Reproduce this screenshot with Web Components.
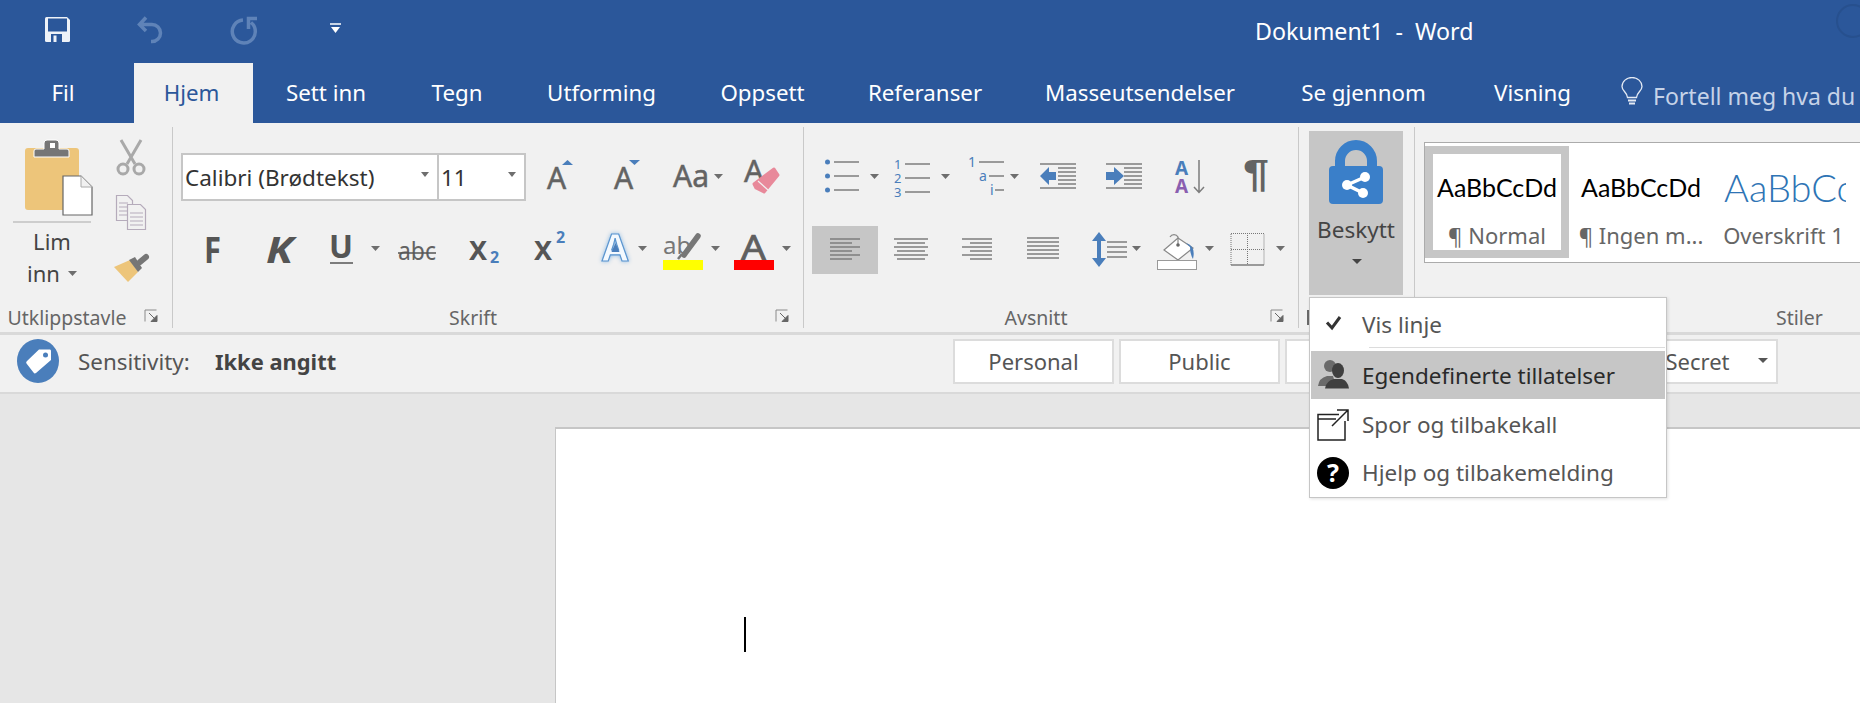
<!DOCTYPE html>
<html lang="nb">
<head>
<meta charset="utf-8">
<title>Dokument1 - Word</title>
<style>
html, body { margin: 0; height: 100%; overflow: hidden; background: #e6e6e6; }
body { font-family: "Noto Sans", "Open Sans", sans-serif; color: #444; }
</style>
</head>
<body>
<word-app></word-app>
<script>
const BLUE = '#4a7ebb';
const GREY = '#636363';

const tri = (x, y, w = 9, c = '#6e6e6e') => `<path d="M${x} ${y}h${w}l${-w / 2} 5z" fill="${c}"/>`;
const l = (x1, x2, y, c = '#7c7c7c') => `<path d="M${x1} ${y}H${x2}" stroke="${c}" stroke-width="1.5" fill="none"/>`;
const t = (x, y, s, size, fill = GREY, extra = '') =>
	`<text x="${x}" y="${y}" font-size="${size}" fill="${fill}" ${extra}>${s}</text>`;

// every icon is drawn in page coordinates: [x, width, height, svg]
const ICONS = {
	paste: [0, 108, 175, `
		<rect x="25" y="148" width="54" height="62" rx="3" fill="#edc57a"/>
		<path d="M34 157v-6q0-2 2-2h8v-6q0-3 3-3h9q3 0 3 3v6h8q2 0 2 2v6z" fill="#767676" stroke="#fff" stroke-width="1"/>
		<rect x="50" y="143" width="5" height="5" fill="#fff"/>
		<path d="M63 176H81L92 187V215H63Z" fill="#fff" stroke="#666" stroke-width="1.2"/>
		<path d="M81 176V187H92" fill="#f1f1f1" stroke="#aaa"/>
		${l(13, 91, 222, '#c0c0c0')}
		${t(52, 250, 'Lim', 22, '#444', 'text-anchor="middle"')}
		${t(27, 282, 'inn', 22, '#444')}
		${tri(68, 271)}`],
	cut: [108, 64, 50, `
		<g fill="none" stroke="#a9a9a9" stroke-width="3">
			<circle cx="123" cy="169" r="5"/><circle cx="139" cy="169" r="5"/>
			<path d="M127 164L141 140M135 164L121 140"/>
		</g>`],
	copy: [108, 64, 50, `
		<g fill="#f1f1f1" stroke="#b5abbb" stroke-width="1.2">
			<path d="M116.500 195.500h11l5 5v20h-16z"/>
			<path d="M127.500 204.500h13l5 5v20h-18z"/>
		</g>
		<path d="M119 203h9M119 207h8M119 211h8M119 215h8M130 213h13M130 217h13M130 221h13M130 225h13" stroke="#b5abbb"/>`],
	painter: [108, 64, 40, `
		<path d="M114 267L130 260L138 272L128 282Z" fill="#edc57a"/>
		<path d="M129 260L135 257L142 268L138 272Z" fill="#767676"/>
		<path d="M140 262L146 257" stroke="#767676" stroke-width="6" stroke-linecap="round"/>`],
	grow: [526, 69, 48, `${t(547, 189, 'A', 30, GREY, `stroke="${GREY}" stroke-width=".5"`)}<path d="M562 165l5.500-5l5.500 5z" fill="${BLUE}"/>`],
	shrink: [595, 65, 48, `${t(614, 189, 'A', 30, GREY, `stroke="${GREY}" stroke-width=".5"`)}<path d="M629 160l5.500 5l5.500-5z" fill="${BLUE}"/>`],
	aa: [660, 75, 48, `${t(673, 187, 'Aa', 30, GREY, `stroke="${GREY}" stroke-width=".5"`)}${tri(714, 174)}`],
	clear: [735, 65, 48, `${t(744, 182, 'A', 31, GREY, `stroke="${GREY}" stroke-width=".5"`)}
		<path d="M774 169L778 175L764 192L756 188L754 184Z" fill="#e8899a" stroke="#e8899a" stroke-width="3" stroke-linejoin="round"/>
		<path d="M758 181L768 190" stroke="#f1f1f1" stroke-width="1.2"/>`],
	bold: [181, 64, 48, t(204, 263, 'F', 35, '#555', 'font-weight="700" textLength="17" lengthAdjust="spacingAndGlyphs"')],
	italic: [245, 65, 48, t(266, 263, 'K', 35, '#555', 'font-weight="700" font-style="italic" textLength="27" lengthAdjust="spacingAndGlyphs"')],
	under: [310, 75, 48, `${t(329, 258, 'U', 32, '#555', 'font-weight="700" textLength="24" lengthAdjust="spacingAndGlyphs"')}
		${l(330, 353, 263, '#555')}${tri(371, 246)}`],
	strike: [385, 65, 48, `${t(398, 260, 'abc', 25, GREY, 'textLength="38" lengthAdjust="spacingAndGlyphs"')}${l(398, 436, 253, '#555')}`],
	sub: [450, 70, 48, `${t(469, 260, 'X', 27, '#555', 'font-weight="700"')}${t(490, 263, '2', 16, BLUE, 'font-weight="700"')}`],
	sup: [520, 70, 48, `${t(534, 260, 'X', 27, '#555', 'font-weight="700"')}${t(556, 243, '2', 16, BLUE, 'font-weight="700"')}`],
	effects: [590, 65, 48, `
		<g style="filter:drop-shadow(0 0 2px #8fbbe4)">${t(602, 261, 'A', 38, '#f4f9fe', `font-weight="700" stroke="#5b95cf" stroke-width="1.2"`)}</g>
		<path d="M615.500 243l4 9h-8z" fill="${BLUE}"/>${tri(638, 246)}`],
	high: [655, 75, 48, `${t(663, 254, 'ab', 24, '#777')}
		<path d="M698 236L684 255" stroke="#777" stroke-width="5.500" stroke-linecap="round"/>
		<path d="M682 254L678 259" stroke="#777" stroke-width="2.500"/>
		<rect x="663" y="260" width="40" height="10" fill="#ff0"/>${tri(711, 246)}`],
	color: [730, 73, 48, `${t(741, 260, 'A', 35, '#5f5f5f', 'stroke="#5f5f5f" stroke-width=".7" textLength="25" lengthAdjust="spacingAndGlyphs"')}
		<rect x="734" y="260" width="40" height="10" fill="#f00"/>${tri(782, 246)}`],
	bullets: [812, 73, 48, `
		<g fill="${BLUE}"><circle cx="827.500" cy="162" r="2.500"/><circle cx="827.500" cy="176" r="2.500"/><circle cx="827.500" cy="190" r="2.500"/></g>
		${l(834, 859, 162)}${l(834, 859, 176)}${l(834, 859, 190)}${tri(870, 174)}`],
	numbers: [885, 73, 48, `
		${t(894, 169, '1', 13, BLUE)}${t(894, 183, '2', 13, BLUE)}${t(894, 197, '3', 13, BLUE)}
		${l(905, 930, 164)}${l(905, 930, 178)}${l(905, 930, 192)}${tri(941, 174)}`],
	multi: [958, 72, 48, `
		${t(968, 167, '1', 14, BLUE)}${t(979, 181, 'a', 14, BLUE)}${t(990, 195, 'i', 14, BLUE)}
		${l(979, 1004, 162)}${l(989, 1004, 176)}${l(995, 1004, 190)}${tri(1010, 174)}`],
	outdent: [1030, 60, 48, `
		${l(1040, 1076, 164)}${l(1040, 1076, 188)}
		${[168, 172, 176, 180, 184].map(y => l(1058, 1076, y)).join('')}
		<path d="M1040 176L1049 167V172H1056V180H1049V185Z" fill="${BLUE}"/>`],
	indent: [1090, 70, 48, `
		${l(1106, 1142, 164)}${l(1106, 1142, 188)}
		${[168, 172, 176, 180, 184].map(y => l(1124, 1142, y)).join('')}
		<path d="M1106 172H1114V167L1124 176L1114 185V180H1106Z" fill="${BLUE}"/>`],
	sort: [1160, 70, 48, `
		${t(1175, 175, 'A', 19, BLUE, 'font-weight="700"')}${t(1175, 193, 'A', 19, '#8a5fb0', 'font-weight="700"')}
		<path d="M1199 160V192M1194 187L1199 192.500L1204 187" stroke="#7c7c7c" stroke-width="1.5" fill="none"/>`],
	pilcrow: [1230, 60, 48, t(1243, 187, '¶', 38, '#636363', 'font-weight="700" font-family="Liberation Sans" textLength="26" lengthAdjust="spacingAndGlyphs"')],
	left: [812, 66, 48, `<rect x="812" y="226" width="66" height="48" fill="#c6c6c6"/>
		${[239, 243, 247, 251, 255, 259].map((y, i) => l(830, i % 2 ? 852 : 860, y)).join('')}`],
	center: [878, 67, 48, [239, 243, 247, 251, 255, 259].map((y, i) => i % 2 ? l(897, 925, y) : l(894, 928, y)).join('')],
	right: [945, 65, 48, [239, 243, 247, 251, 255, 259].map((y, i) => l(i % 2 ? 970 : 962, 992, y)).join('')],
	justify: [1010, 70, 48, [238, 242, 246, 250, 254, 258].map(y => l(1027, 1059, y)).join('')],
	spacing: [1080, 70, 48, `
		<path d="M1099 238V261" stroke="${BLUE}" stroke-width="4"/>
		<path d="M1092 241L1099 232L1106 241ZM1092 258L1099 267L1106 258Z" fill="${BLUE}"/>
		${[242, 247, 252, 257].map(y => l(1107, 1127, y)).join('')}${tri(1132, 246)}`],
	shading: [1150, 72, 48, `
		<path d="M1178 238L1193 248L1178 260L1164 250Z" fill="#fff" stroke="#888" stroke-width="1.2"/>
		<path d="M1178 246V237a4.500 4.500 0 0 0-8 0" fill="none" stroke="#888" stroke-width="1.2"/>
		<circle cx="1178" cy="245" r="1.800" fill="#666"/>
		<path d="M1186 243Q1196 246 1193 259Q1190 254 1190 247Z" fill="${BLUE}"/>
		<rect x="1157.500" y="260.500" width="39" height="9" fill="#fff" stroke="#999"/>${tri(1205, 246)}`],
	borders: [1222, 68, 48, `
		<path d="M1231 233.500H1264V265M1231 265V233.500M1231 249.500H1264M1247.500 233V265" fill="none" stroke="#777" stroke-dasharray="1 1"/>
		${l(1231, 1264, 265)}${tri(1276, 246)}`]
};

class BaseElement extends HTMLElement {
	constructor() {
		super();
		this._root = this.attachShadow({ mode: 'open' });
		this._root.innerHTML = this.template();
	}
}

class RibbonBtn extends BaseElement {
	template() {
		const [x, w, h, svg] = ICONS[this.getAttribute('icon')];
		const y = this.getAttribute('y') || 0;
		return `<style>:host { display: block; flex: none; width: ${w}px; height: ${h}px; } svg { display: block; overflow: visible; }</style>
		<svg width="${w}" height="${h}" viewBox="${x} ${y} ${w} ${h}">${svg}</svg>`;
	}
}
customElements.define('ribbon-btn', RibbonBtn);

class RibbonRow extends BaseElement {
	template() {
		return `<style>:host { display: flex; height: 48px; }</style><slot></slot>`;
	}
}
customElements.define('ribbon-row', RibbonRow);

class WordCombo extends BaseElement {
	template() {
		return `<style>
		:host { display: flex; align-items: center; justify-content: space-between; box-sizing: border-box; flex: none;
			height: 48px; background: #fff; border: 2px solid #c6c6c6; padding: 0 4px 0 2px; font-size: 22.500px; color: #333; white-space: nowrap; }
		i { flex: none; width: 0; height: 0; border: 4.500px solid transparent; border-top: 5px solid #6e6e6e; border-bottom: 0; margin: 0 4px 5px 0; }
		</style><span><slot></slot></span><i></i>`;
	}
}
customElements.define('word-combo', WordCombo);

class RibbonGroup extends BaseElement {
	template() {
		const launcher = this.hasAttribute('launcher');
		return `<style>
		:host { display: flex; flex-direction: column; flex: none; box-sizing: border-box; height: 201px; margin-top: 4px; border-right: 1px solid #c9c9c9; }
		.body { height: 173px; }
		.foot { display: flex; align-items: center; height: 28px; padding-top: 6px; box-sizing: border-box; font-size: 19.500px; color: #666; white-space: nowrap; }
		.label { flex: 1; text-align: center; }
		.launch { flex: none; width: 38px; }
		svg { display: block; margin-top: -2px; margin-left: 10px; }
		</style>
		<div class="body"><slot></slot></div>
		<div class="foot"><div class="label"><slot name="label"></slot></div>
		${launcher ? `<div class="launch"><svg width="15" height="14" viewBox="0 0 15 14" fill="none">
			<path d="M12.500 1H1V12.500" stroke="#8a8a8a"/><path d="M5 4L11 10M13 6.500V12.500H7Z" stroke="#666" fill="#666"/></svg></div>` : ''}</div>`;
	}
}
customElements.define('ribbon-group', RibbonGroup);

class StyleCard extends BaseElement {
	template() {
		return `<style>
		:host { display: block; flex: none; box-sizing: border-box; width: 144px; height: 112px; border: 8px solid transparent; overflow: hidden; }
		:host([selected]) { border-color: #c6c6c6; background: #fff; background-clip: padding-box; }
		.sample { display: flex; align-items: center; justify-content: center; height: 66px; white-space: nowrap; overflow: hidden;
			font-family: Lato, "Noto Sans", sans-serif; font-size: 25px; color: #000; }
		.name { height: 30px; line-height: 30px; text-align: center; font-size: 22px; color: #666; white-space: nowrap; }
		:host([heading]) .sample { justify-content: flex-start; padding-left: 3px; font-size: 38px; font-weight: 300; color: #2e74b5; }
		</style><div class="sample"><slot name="sample"></slot></div><div class="name"><slot></slot></div>`;
	}
}
customElements.define('style-card', StyleCard);

class WordTab extends BaseElement {
	template() {
		return `<style>
		:host { display: flex; align-items: center; justify-content: center; flex: none; height: 60px; color: #fff; font-size: 22.300px; padding-bottom: 2px; box-sizing: border-box; white-space: nowrap; }
		:host([active]) { background: #f1f1f1; color: #2b579a; }
		</style><slot></slot>`;
	}
}
customElements.define('word-tab', WordTab);

class WordTitlebar extends BaseElement {
	template() {
		return `<style>
		:host { display: flex; position: relative; height: 63px; background: #2b579a; overflow: hidden; }
		svg { display: block; flex: none; }
		.title { flex: none; margin: 15px 0 0 785px; color: #fff; font-size: 23.200px; white-space: pre; }
		.ring { position: absolute; right: 0; top: 0; }
		</style>
		<svg width="470" height="63" viewBox="0 0 470 63">
			<path d="M45 18.500q0-1.500 1.500-1.500H67l3 3V40.500q0 1.500-1.500 1.500H46.500q-1.500 0-1.500-1.500Z" fill="#eef2f8"/>
			<rect x="48" y="18.500" width="19" height="13" fill="#2b579a"/>
			<rect x="51" y="34" width="11" height="8" fill="#2b579a"/>
			<rect x="53.500" y="35.500" width="3" height="6.500" fill="#eef2f8"/>
			<path d="M146 17.500L139.500 24.500L146 31M140 24.500H152a8.500 8.500 0 0 1 0 17h-1" fill="none" stroke="#5f83b8" stroke-width="3.500"/>
			<path d="M243 20A11.500 11.500 0 1 0 251 22.500M257 18.500H248.500V29" fill="none" stroke="#5f83b8" stroke-width="3.500"/>
			<path d="M330 24H341" stroke="#fff" stroke-width="1.500"/><path d="M331 27H340L335.500 33Z" fill="#fff"/>
		</svg>
		<div class="title">Dokument1  -  Word</div>
		<svg class="ring" width="30" height="45" viewBox="0 0 30 45"><circle cx="23" cy="21" r="16" fill="none" stroke="#27508e" stroke-width="2"/></svg>`;
	}
}
customElements.define('word-titlebar', WordTitlebar);

class WordTabs extends BaseElement {
	template() {
		return `<style>
		:host { display: flex; align-items: stretch; height: 60px; background: #2b579a; overflow: hidden; }
		.tell { display: flex; align-items: center; flex: none; margin-left: 16px; color: #c6d3e8; font-size: 23px; white-space: nowrap; padding-top: 6px; }
		svg { flex: none; margin: -10px 10px 0 0; }
		</style><slot></slot>
		<div class="tell"><svg width="22" height="28" viewBox="0 0 22 28" fill="none" stroke="#e4eaf4" stroke-width="1.300">
			<path d="M6.500 20.500C6 15 1 14 1 9.500a10 9 0 0 1 20 0C21 14 16 15 15.500 20.500Z"/><path d="M7 23.500H15M8 26.500H14" stroke-width="1.800"/></svg>
			<slot name="tell"></slot></div>`;
	}
}
customElements.define('word-tabs', WordTabs);

class WordRibbon extends BaseElement {
	template() {
		return `<style>
		:host { display: flex; height: 212px; box-sizing: border-box; background: #f1f1f1; border-bottom: 3px solid #d9d9d9; overflow: hidden; }
		</style><slot></slot>`;
	}
}
customElements.define('word-ribbon', WordRibbon);

class ProtectBtn extends BaseElement {
	template() {
		return `<style>
		:host { display: block; box-sizing: border-box; width: 94px; height: 164px; margin: 4px 0 0 10px; background: #c6c6c6; }
		svg { display: block; }
		</style>
		<svg width="94" height="164" viewBox="1309 131 94 164">
			<path d="M1340 170V161a16 16 0 0 1 32 0V170" fill="none" stroke="#3a7fc9" stroke-width="10"/>
			<rect x="1329" y="166" width="54" height="38" rx="4" fill="#3a7fc9"/>
			<path d="M1365 177L1347 185L1363 193" fill="none" stroke="#fff" stroke-width="3.500"/>
			<g fill="#fff"><circle cx="1365" cy="177" r="5"/><circle cx="1347" cy="185" r="5"/><circle cx="1363" cy="193" r="5"/></g>
			<text x="1356" y="238" font-size="22.500" fill="#444" text-anchor="middle">Beskytt</text>
			<path d="M1352 259h10l-5 5z" fill="#444"/>
		</svg>`;
	}
}
customElements.define('protect-btn', ProtectBtn);

class SensButton extends BaseElement {
	template() {
		return `<style>
		:host { display: flex; align-items: center; justify-content: center; position: relative; flex: none; box-sizing: border-box; width: 161px; height: 45px;
			background: #fff; border: 2px solid #dcdcdc; font-size: 22px; color: #555; }
		i { position: absolute; right: 8px; top: 17px; width: 0; height: 0; border: 5px solid transparent; border-top: 5px solid #555; border-bottom: 0; }
		</style><slot></slot>${this.hasAttribute('drop') ? '<i></i>' : ''}`;
	}
}
customElements.define('sens-button', SensButton);

class SensitivityBar extends BaseElement {
	template() {
		return `<style>
		:host { display: flex; align-items: center; box-sizing: border-box; height: 59px; padding: 0 82px 5px 17px; background: #f1f1f1; border-bottom: 2px solid #d9d9d9; }
		svg { flex: none; margin-right: 19px; }
		.lab { flex: none; font-size: 22.400px; color: #555; width: 137px; white-space: nowrap; }
		.val { flex: none; font-size: 21.900px; font-weight: 700; color: #444; white-space: nowrap; }
		.btns { display: flex; gap: 5px; margin-left: auto; }
		</style>
		<svg width="42" height="44" viewBox="17 341 42 44">
			<ellipse cx="38" cy="363" rx="21" ry="22" fill="#4a7ebb"/>
			<path d="M39 351.500L50 351.500Q51 351.500 51 353V362L36 375Q34.500 376 33.500 374.500L26.500 365.500Q25.500 364 27 363Z" fill="#fff"/>
			<circle cx="45.500" cy="357" r="2.500" fill="#4a7ebb"/>
		</svg>
		<div class="lab">Sensitivity:</div><div class="val">Ikke angitt</div>
		<div class="btns"><slot></slot></div>`;
	}
}
customElements.define('sensitivity-bar', SensitivityBar);

class DocArea extends BaseElement {
	template() {
		return `<style>
		:host { display: block; height: 309px; padding-top: 33px; box-sizing: border-box; background: #e6e6e6; }
		.page { box-sizing: border-box; height: 276px; margin-left: 555px; padding: 188px 0 0 188px; background: #fff; border-top: 2px solid #c6c6c6; border-left: 1px solid #c6c6c6; }
		.caret { width: 2px; height: 35px; background: #000; }
		</style><div class="page"><div class="caret"></div></div>`;
	}
}
customElements.define('doc-area', DocArea);

class MenuItem extends BaseElement {
	template() {
		return `<style>
		:host { display: flex; align-items: center; height: 48px; font-size: 22.500px; color: #555; white-space: nowrap; }
		:host([active]) { background: #c6c6c6; color: #2a2a2a; }
		:host([first]) { height: 44px; }
		:host(:not([active]):not([first])) .tx { margin-top: -2px; }
		.ic { flex: none; width: 51px; display: flex; justify-content: flex-start; }
		</style><div class="ic"><slot name="icon"></slot></div><div class="tx"><slot></slot></div>`;
	}
}
customElements.define('menu-item', MenuItem);

class WordMenu extends BaseElement {
	template() {
		return `<style>
		:host { display: block; position: absolute; left: 1309px; top: 297px; box-sizing: border-box; width: 358px; height: 201px; padding: 4px 1px 0;
			background: #fff; border: 1px solid #c6c6c6; box-shadow: 1px 1px 3px rgba(0,0,0,.12); }
		.sep { height: 1px; margin: 1px 0 3px 58px; background: #dcdcdc; }
		.gap { height: 2px; }
		</style>
		<slot name="top"></slot><div class="sep"></div><slot name="active"></slot><div class="gap"></div><slot></slot>`;
	}
}
customElements.define('word-menu', WordMenu);

class WordApp extends BaseElement {
	template() {
		return `<style>
		:host { display: block; position: relative; width: 1860px; height: 703px; overflow: hidden; }
		</style>
		<word-titlebar></word-titlebar>
		<word-tabs>
			<word-tab style="width:134px;padding-right:8px">Fil</word-tab>
			<word-tab active style="width:119px;padding-right:4px">Hjem</word-tab>
			<word-tab style="width:146px">Sett inn</word-tab>
			<word-tab style="width:116px">Tegn</word-tab>
			<word-tab style="width:173px">Utforming</word-tab>
			<word-tab style="width:149px">Oppsett</word-tab>
			<word-tab style="width:176px">Referanser</word-tab>
			<word-tab style="width:254px">Masseutsendelser</word-tab>
			<word-tab style="width:193px">Se gjennom</word-tab>
			<word-tab style="width:145px">Visning</word-tab>
			<span slot="tell">Fortell meg hva du</span>
		</word-tabs>
		<word-ribbon>
			<ribbon-group launcher style="width:173px">
				<div style="display:flex">
					<ribbon-btn icon="paste" y="131" style="margin-top:4px"></ribbon-btn>
					<div style="margin-top:13px">
						<ribbon-btn icon="cut" y="140"></ribbon-btn>
						<ribbon-btn icon="copy" y="190"></ribbon-btn>
						<ribbon-btn icon="painter" y="250" style="margin-top:10px"></ribbon-btn>
					</div>
				</div>
				<span slot="label">Utklippstavle</span>
			</ribbon-group>
			<ribbon-group launcher style="width:631px;padding-left:8px">
				<ribbon-row style="margin-top:26px">
					<word-combo style="width:258px">Calibri (Brødtekst)</word-combo>
					<word-combo style="width:89px;margin-left:-2px">11</word-combo>
					<ribbon-btn icon="grow" y="153"></ribbon-btn>
					<ribbon-btn icon="shrink" y="153"></ribbon-btn>
					<ribbon-btn icon="aa" y="153"></ribbon-btn>
					<ribbon-btn icon="clear" y="153"></ribbon-btn>
				</ribbon-row>
				<ribbon-row style="margin-top:25px">
					<ribbon-btn icon="bold" y="226"></ribbon-btn>
					<ribbon-btn icon="italic" y="226"></ribbon-btn>
					<ribbon-btn icon="under" y="226"></ribbon-btn>
					<ribbon-btn icon="strike" y="226"></ribbon-btn>
					<ribbon-btn icon="sub" y="226"></ribbon-btn>
					<ribbon-btn icon="sup" y="226"></ribbon-btn>
					<ribbon-btn icon="effects" y="226"></ribbon-btn>
					<ribbon-btn icon="high" y="226"></ribbon-btn>
					<ribbon-btn icon="color" y="226"></ribbon-btn>
				</ribbon-row>
				<span slot="label">Skrift</span>
			</ribbon-group>
			<ribbon-group launcher style="width:495px;padding-left:8px">
				<ribbon-row style="margin-top:26px">
					<ribbon-btn icon="bullets" y="153"></ribbon-btn>
					<ribbon-btn icon="numbers" y="153"></ribbon-btn>
					<ribbon-btn icon="multi" y="153"></ribbon-btn>
					<ribbon-btn icon="outdent" y="153"></ribbon-btn>
					<ribbon-btn icon="indent" y="153"></ribbon-btn>
					<ribbon-btn icon="sort" y="153"></ribbon-btn>
					<ribbon-btn icon="pilcrow" y="153"></ribbon-btn>
				</ribbon-row>
				<ribbon-row style="margin-top:25px">
					<ribbon-btn icon="left" y="226"></ribbon-btn>
					<ribbon-btn icon="center" y="226"></ribbon-btn>
					<ribbon-btn icon="right" y="226"></ribbon-btn>
					<ribbon-btn icon="justify" y="226"></ribbon-btn>
					<ribbon-btn icon="spacing" y="226"></ribbon-btn>
					<ribbon-btn icon="shading" y="226"></ribbon-btn>
					<ribbon-btn icon="borders" y="226"></ribbon-btn>
				</ribbon-row>
				<span slot="label">Avsnitt</span>
			</ribbon-group>
			<ribbon-group style="width:116px">
				<protect-btn></protect-btn>
				<div slot="label" style="width:3px;height:15px;margin-left:8px;background:#6a6a6a"></div>
			</ribbon-group>
			<ribbon-group style="width:445px;border-right:0;padding-left:9px">
				<div style="display:flex;box-sizing:border-box;width:600px;height:121px;margin-top:15px;padding-top:3px;background:#fff;border:1px solid #ababab">
					<style-card selected><span slot="sample">AaBbCcDd</span>¶ Normal</style-card>
					<style-card><span slot="sample">AaBbCcDd</span>¶ Ingen m...</style-card>
					<style-card heading style="width:141px"><span slot="sample">AaBbCc</span>Overskrift 1</style-card>
				</div>
				<span slot="label" style="display:block;padding-left:315px">Stiler</span>
			</ribbon-group>
		</word-ribbon>
		<sensitivity-bar>
			<sens-button>Personal</sens-button>
			<sens-button>Public</sens-button>
			<sens-button></sens-button>
			<sens-button></sens-button>
			<sens-button drop>Secret</sens-button>
		</sensitivity-bar>
		<doc-area></doc-area>
		<word-menu>
			<menu-item slot="top" first>
				<svg slot="icon" width="46" height="20" viewBox="1311 315 46 20"><path d="M1327 323.500L1332 329L1340 318" fill="none" stroke="#333" stroke-width="3"/></svg>
				Vis linje
			</menu-item>
			<menu-item slot="active" active>
				<svg slot="icon" width="46" height="34" viewBox="1311 358 46 34">
					<circle cx="1330" cy="366" r="6" fill="#6a6a6a"/><path d="M1318 386Q1319 378 1327 376L1333 376L1336 386Z" fill="#6a6a6a"/>
					<ellipse cx="1338" cy="370.500" rx="6" ry="7.500" fill="#3f3f3f"/><path d="M1325 388.500Q1326 381 1334 379L1342 379Q1348 381 1349 388.500Z" fill="#3f3f3f"/>
				</svg>
				Egendefinerte tillatelser
			</menu-item>
			<menu-item>
				<svg slot="icon" width="46" height="34" viewBox="1311 405 46 34" fill="none" stroke="#222" stroke-width="1.500">
					<path d="M1339 411.500H1318V437H1345V418M1318 416H1336"/><path d="M1332 423L1348 407M1337 407H1348V418"/>
				</svg>
				Spor og tilbakekall
			</menu-item>
			<menu-item>
				<svg slot="icon" width="46" height="34" viewBox="1311 454 46 34">
					<circle cx="1333" cy="471" r="16" fill="#000"/>
					<text x="1333" y="480" font-size="25" font-weight="700" fill="#fff" text-anchor="middle">?</text>
				</svg>
				Hjelp og tilbakemelding
			</menu-item>
		</word-menu>`;
	}
}
customElements.define('word-app', WordApp);
</script>
</body>
</html>
